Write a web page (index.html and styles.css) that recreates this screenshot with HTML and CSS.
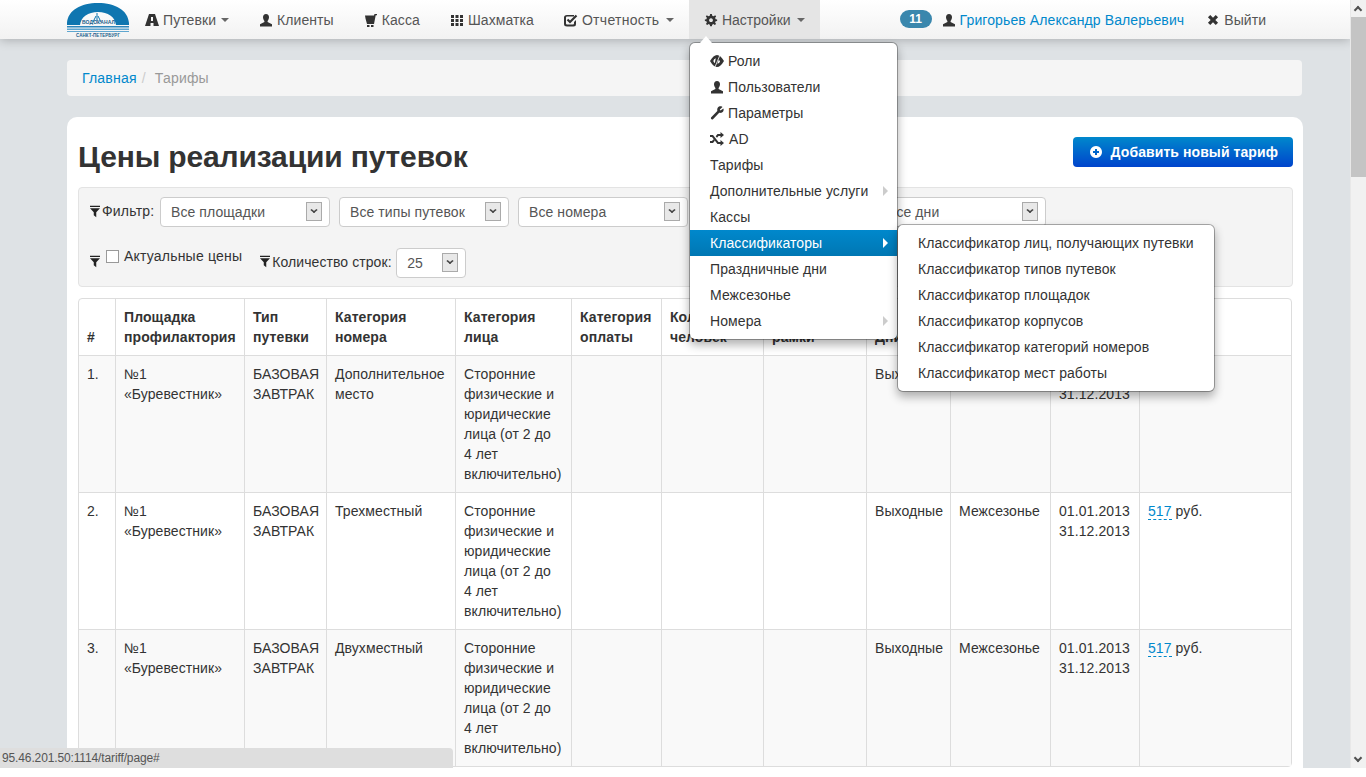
FILE: index.html
```html
<!DOCTYPE html>
<html lang="ru">
<head>
    <meta charset="UTF-8">
    <title>Тарифы</title>
    <link rel="stylesheet" href="styles.css">
</head>
<body>
    <div class="navbar">
        <svg class="logo" viewBox="0 0 64 38">
            <path d="M1 23C2 10 15 3 32 3C49 3 62 10 63 23V25H50C49 17 42 12 32 12C22 12 15 17 14 25H1Z" fill="#0f76b0"/>
            <path d="M31 13V21M27 22L30 16M35 22L32 16" stroke="#0f76b0" stroke-width="1" fill="none"/>
            <text class="logo-name" x="16" y="24" textLength="33" lengthAdjust="spacingAndGlyphs">ВОДОКАНАЛ</text>
            <rect x="1" y="26" width="62" height="1.500" fill="#2d86bb"/>
            <rect x="1" y="28.500" width="62" height="1.500" fill="#5fa6cf"/>
            <rect x="1" y="31" width="62" height="1" fill="#5fa6cf"/>
            <text class="logo-city" x="10" y="37" textLength="44" lengthAdjust="spacingAndGlyphs">САНКТ-ПЕТЕРБУРГ</text>
        </svg>
        <ul class="nav">
            <li><svg class="ico" viewBox="0 0 14 14"><path d="M4 1H10L14 13H8.500V10H5.500V13H0ZM6 4V8H8V4Z"/></svg>Путевки<span class="caret"></span></li>
            <li><svg class="ico" viewBox="0 0 14 14"><use href="#user"/></svg>Клиенты</li>
            <li><svg class="ico" viewBox="0 0 14 14"><path d="M1 2.500H10L10.500 1H13V2.300H11.700L10 11H3L1.500 5.500ZM3 12H5.500V14H3ZM7 12H9.500V14H7Z"/></svg>Касса</li>
            <li><svg class="ico" viewBox="0 0 14 14"><path d="M1 2H4V5H1ZM5.500 2H8.500V5H5.500ZM10 2H13V5H10ZM1 6H4V9H1ZM5.500 6H8.500V9H5.500ZM10 6H13V9H10ZM1 10H4V13H1ZM5.500 10H8.500V13H5.500ZM10 10H13V13H10Z"/></svg>Шахматка</li>
            <li class="nav-report"><svg class="ico" viewBox="0 0 14 14"><path d="M3 2H10V3.500H3Q2 3.500 2 4.500V10.500Q2 11.500 3 11.500H9Q10 11.500 10 10.500V9L12 7V11Q12 13.500 9.500 13.500H3Q0 13.500 0 11V4.500Q0 2 3 2Z"/><path d="M3.500 6.500L6 9L12.500 2.500" fill="none" stroke="#333" stroke-width="2.200"/></svg>Отчетность<span class="caret"></span></li>
            <li class="open"><svg class="ico" viewBox="-1 -1 16 16"><path fill-rule="evenodd" d="M6 0H8L8.400 2L10 2.700L11.800 1.500L12.900 3L11.700 4.500L12.300 6L14 6.300V8L12.300 8.300L11.700 9.800L12.800 11.500L11.300 12.800L9.800 11.600L8.300 12.300L8 14H6L5.700 12.300L4.200 11.600L2.700 12.800L1.200 11.500L2.300 9.800L1.700 8.300L0 8V6.300L1.700 6L2.300 4.500L1.100 3L2.200 1.500L4 2.700L5.600 2ZM7 5A2.200 2.200 0 1 0 7.010 5Z"/></svg>Настройки<span class="caret"></span></li>
        </ul>
        <div class="user-nav">
            <span class="badge">11</span>
            <svg class="ico" viewBox="0 0 14 14"><use href="#user"/></svg><a class="link user-name" href="#">Григорьев Александр Валерьевич</a>
            <span class="logout"><svg class="ico" viewBox="-2 -2 18 18"><path d="M0.500 3.500L3.500 0.500L7 4L10.500 0.500L13.500 3.500L10 7L13.500 10.500L10.500 13.500L7 10L3.500 13.500L0.500 10.500L4 7Z"/></svg>Выйти</span>
        </div>
    </div>

    <svg class="defs">
        <defs>
            <symbol id="user" viewBox="0 0 14 14"><path d="M7 1C9 1 10 2.500 10 4.300C10 5.800 9.300 7.200 8.600 7.900V9L13 11.300V13.500H1V11.300L5.400 9V7.900C4.700 7.200 4 5.800 4 4.300C4 2.500 5 1 7 1Z"/></symbol>
            <symbol id="funnel" viewBox="0 0 12 14"><path d="M0 0H12V1.500H0ZM0 3H12L7.500 8V14L4.500 11.500V8Z"/></symbol>
        </defs>
    </svg>

    <div class="page">
        <div class="breadcrumb"><a class="link" href="#">Главная</a><span class="sep">/</span><span class="crumb">Тарифы</span></div>

        <div class="panel">
            <div class="title-row">
                <h1>Цены реализации путевок</h1>
                <a class="btn-add" href="#">
                    <svg class="plus" viewBox="0 0 14 14"><path fill-rule="evenodd" d="M7 1A6 6 0 1 0 7.010 1ZM6 4H8V6H10V8H8V10H6V8H4V6H6Z"/></svg>Добавить новый тариф
                </a>
            </div>

            <div class="filters">
                <div class="filter-row">
                    <svg class="funnel"><use href="#funnel"/></svg><span class="flabel flabel-filter">Фильтр:</span>
                    <div class="sel">Все площадки<span class="sel-btn"></span></div>
                    <div class="sel">Все типы путевок<span class="sel-btn"></span></div>
                    <div class="sel">Все номера<span class="sel-btn"></span></div>
                    <div class="sel">Все оплаты<span class="sel-btn"></span></div>
                    <div class="sel">Все дни<span class="sel-btn"></span></div>
                </div>
                <div class="filter-row filter-row-2">
                    <svg class="funnel funnel-low"><use href="#funnel"/></svg>
                    <span class="check"></span><span class="actual">Актуальные цены</span>
                    <svg class="funnel"><use href="#funnel"/></svg><span class="flabel flabel-rows">Количество строк:</span>
                    <div class="sel sel-rows">25<span class="sel-btn"></span></div>
                </div>
            </div>

            <table class="prices">
                <thead>
                    <tr>
                        <th class="c-num">#</th>
                        <th class="c-place">Площадка профилактория</th>
                        <th class="c-type">Тип путевки</th>
                        <th class="c-room">Категория номера</th>
                        <th class="c-person">Категория лица</th>
                        <th class="c-pay">Категория оплаты</th>
                        <th class="c-count">Количество человек</th>
                        <th class="c-frame">Возрастные рамки</th>
                        <th class="c-days">Дни</th>
                        <th class="c-season">Сезон</th>
                        <th class="c-dates">Период</th>
                        <th class="c-price">Цена</th>
                    </tr>
                </thead>
                <tbody>
                    <tr>
                        <td>1.</td><td>№1 «Буревестник»</td><td>БАЗОВАЯ ЗАВТРАК</td><td>Дополнительное место</td>
                        <td>Сторонние физические и юридические лица (от 2 до 4&nbsp;лет включительно)</td><td></td><td></td><td></td>
                        <td>Выходные</td><td>Межсезонье</td><td>01.01.2013 31.12.2013</td><td><a class="price" href="#">517</a> руб.</td>
                    </tr>
                    <tr>
                        <td>2.</td><td>№1 «Буревестник»</td><td>БАЗОВАЯ ЗАВТРАК</td><td>Трехместный</td>
                        <td>Сторонние физические и юридические лица (от 2 до 4&nbsp;лет включительно)</td><td></td><td></td><td></td>
                        <td>Выходные</td><td>Межсезонье</td><td>01.01.2013 31.12.2013</td><td><a class="price" href="#">517</a> руб.</td>
                    </tr>
                    <tr>
                        <td>3.</td><td>№1 «Буревестник»</td><td>БАЗОВАЯ ЗАВТРАК</td><td>Двухместный</td>
                        <td>Сторонние физические и юридические лица (от 2 до 4&nbsp;лет включительно)</td><td></td><td></td><td></td>
                        <td>Выходные</td><td>Межсезонье</td><td>01.01.2013 31.12.2013</td><td><a class="price" href="#">517</a> руб.</td>
                    </tr>
                </tbody>
            </table>
        </div>
    </div>

    <!-- Settings menu -->
    <ul class="menu menu-main">
        <li><svg class="ico" viewBox="0 0 14 14"><path fill-rule="evenodd" d="M0 7Q3.500 1 7 1Q10.500 1 14 7Q10.500 13 7 13Q3.500 13 0 7ZM5.800 4.300Q3.800 4.800 3.300 7Q3.800 8.600 4.800 9.300ZM8.800 5.700L7.300 9.800Q9.500 9.300 10 7.400Q9.500 6.300 8.800 5.700Z"/><path d="M10.200 0.500L4.800 13.500" stroke="#fff" stroke-width="0.800"/></svg>Роли</li>
        <li><svg class="ico" viewBox="0 0 14 14"><use href="#user"/></svg>Пользователи</li>
        <li><svg class="ico" viewBox="0 0 14 14"><path d="M9 0.500C11 0 12 .5 12.500 1L9.800 3.500L10.500 4.500L13.400 2.500C14 4 13.500 6 11.500 6.800C10.500 7 9.800 7 9.200 6.800L3 13.200C2 14 .5 13 1 11.500L7.300 5C7 3 7.500 1.200 9 0.500Z"/></svg>Параметры</li>
        <li><svg class="ico ico-wide" viewBox="0 0 14 14"><path d="M0 3H3L8.500 10H10.500V8L14 11L10.500 14V12H7.500L2 5H0ZM0 9H2L3.500 7.200L4.800 8.800L3 11H0ZM7.500 2H10.500V0L14 3L10.500 6V4H8.500L7 5.800L5.700 4.200Z"/></svg>AD</li>
        <li>Тарифы</li>
        <li class="has-sub">Дополнительные услуги</li>
        <li>Кассы</li>
        <li class="has-sub active">Классификаторы</li>
        <li>Праздничные дни</li>
        <li>Межсезонье</li>
        <li class="has-sub">Номера</li>
    </ul>
    <ul class="menu menu-sub">
        <li>Классификатор лиц, получающих путевки</li>
        <li>Классификатор типов путевок</li>
        <li>Классификатор площадок</li>
        <li>Классификатор корпусов</li>
        <li>Классификатор категорий номеров</li>
        <li>Классификатор мест работы</li>
    </ul>

    <div class="statusbar">95.46.201.50:1114/tariff/page#</div>
    <div class="scrollbar"><span class="scroll-up"></span><span class="scroll-thumb"></span><span class="scroll-down"></span></div>
    <div class="bottom-strip"></div>
</body>
</html>
```

FILE: styles.css
```css
html, body {
    margin: 0;
    height: 777px;
    overflow: hidden;
}
body {
    font-family: "Liberation Sans", Arial, sans-serif;
    font-size: 14px;
    line-height: 20px;
    letter-spacing: 0.08px;
    color: #333;
    background: #dee2e5;
    width: 1350px;
}
ul {
    list-style: none;
    margin: 0;
    padding: 0;
}
a {
    text-decoration: none;
}
.link {
    color: #0088cc;
}
.defs {
    display: none;
}
.navbar {
    height: 39px;
    background: linear-gradient(to bottom, #ffffff, #f2f2f2);
    box-shadow: 0 1px 10px rgba(0, 0, 0, 0.25);
    display: flex;
    padding-left: 66px;
    position: relative;
}
.logo {
    width: 64px;
    height: 38px;
}
.logo-name {
    font-size: 5px;
    font-weight: bold;
    fill: #1b5e8c;
}
.logo-city {
    font-size: 4.500px;
    font-weight: bold;
    fill: #1b5e8c;
}
.nav {
    display: flex;
}
.nav li {
    display: flex;
    align-items: center;
    padding: 0 15px;
    color: #555;
}
.nav li.nav-report {
    letter-spacing: 0.3px;
}
.nav li.open {
    background: #e5e5e5;
    letter-spacing: 0;
}
.ico {
    width: 14px;
    height: 14px;
    margin-right: 4px;
    fill: #333;
    flex: none;
}
.ico-wide {
    margin-right: 5px;
}
.caret {
    width: 0;
    height: 0;
    margin-left: 5px;
    border-left: 4px solid transparent;
    border-right: 4px solid transparent;
    border-top: 4px solid #666;
}
.nav-report .caret {
    margin-left: 6.500px;
}
.open .caret {
    margin-left: 6px;
}
.user-nav {
    display: flex;
    align-items: center;
    margin-left: 80px;
    color: #555;
}
.user-name {
    letter-spacing: 0.1px;
}
.badge {
    background: #3a87ad;
    color: #fff;
    font-weight: bold;
    font-size: 12px;
    line-height: 18px;
    width: 32px;
    text-align: center;
    border-radius: 9px;
    margin: 0 10px 1px 0;
}
.logout {
    display: flex;
    align-items: center;
    margin-left: 22px;
}
.page {
    padding: 21px 48px 0 67px;
}
.breadcrumb {
    height: 36px;
    line-height: 36px;
    background: #f5f5f5;
    border-radius: 4px;
    padding-left: 15px;
    letter-spacing: 0.2px;
}
.sep {
    color: #ccc;
    margin: 0 9px 0 5px;
}
.crumb {
    color: #999;
}
.panel {
    background: #fff;
    border-radius: 10px;
    margin: 21px -1px 0 0;
    padding: 20px 10px 0 11px;
    height: 700px;
}
.title-row {
    display: flex;
    justify-content: space-between;
    align-items: flex-start;
    height: 50px;
}
h1 {
    margin: 0;
    font-size: 30px;
    line-height: 40px;
    letter-spacing: -0.15px;
    color: #333;
}
.btn-add {
    display: flex;
    align-items: center;
    height: 30px;
    padding: 0 15px 0 16px;
    color: #fff;
    font-weight: bold;
    border-radius: 4px;
    background: linear-gradient(to bottom, #0088cc, #0044cc);
}
.plus {
    width: 14px;
    height: 14px;
    fill: #fff;
    margin-right: 8px;
}
.filters {
    background: #f4f4f4;
    border: 1px solid #e3e3e3;
    border-radius: 4px;
    height: 98px;
    padding: 0 11px;
}
.filter-row {
    display: flex;
    align-items: center;
    height: 30px;
    margin-top: 9px;
}
.filter-row-2 {
    margin-top: 20px;
}
.funnel {
    width: 10px;
    height: 13px;
    fill: #222;
    flex: none;
    margin: -2px 2px 0 0;
}
.funnel-low {
    margin-right: 6px;
}
.flabel {
    flex: none;
}
.flabel-filter {
    width: 58px;
    margin-top: -3px;
    letter-spacing: 0.2px;
}
.flabel-rows {
    width: 124px;
    margin-top: -1px;
}
.sel {
    box-sizing: border-box;
    width: 170px;
    height: 30px;
    line-height: 28px;
    padding-left: 10px;
    border: 1px solid #ccc;
    border-radius: 4px;
    background: #fff;
    color: #555;
    position: relative;
    margin-right: 9px;
    flex: none;
}
.sel-rows {
    width: 70px;
    margin-top: 2px;
}
.sel-btn {
    position: absolute;
    right: 7px;
    top: 4px;
    width: 14px;
    height: 17px;
    border: 1px solid #aaa;
    background: #e8e8e8;
}
.sel-btn::after {
    content: "";
    position: absolute;
    left: 4px;
    top: 4px;
    width: 6px;
    height: 6px;
    border-right: 2px solid #444;
    border-bottom: 2px solid #444;
    transform: scale(0.85, 0.7) rotate(45deg);
    box-sizing: border-box;
}
.check {
    width: 11px;
    height: 11px;
    border: 1px solid #999;
    background: #fff;
    margin-right: 5px;
    margin-top: -11px;
}
.actual {
    margin-right: 18px;
    margin-top: -12px;
    letter-spacing: 0.2px;
}
.prices {
    border-collapse: separate;
    border-spacing: 0;
    table-layout: fixed;
    width: 1214px;
    margin-top: 11px;
    border: 1px solid #ddd;
    border-radius: 4px;
}
.prices th, .prices td {
    padding: 8px;
    text-align: left;
    vertical-align: top;
    border-left: 1px solid #ddd;
    border-top: 1px solid #ddd;
    overflow: hidden;
}
.prices th {
    vertical-align: bottom;
    border-top: 0;
    color: #333;
}
.prices th:first-child, .prices td:first-child {
    border-left: 0;
}
.prices tbody tr:nth-child(odd) td {
    background: #f9f9f9;
}
.c-num { width: 20px; }
.c-place { width: 112px; }
.c-type { width: 65px; }
.c-room { width: 112px; }
.c-person { width: 99px; }
.c-pay { width: 73px; }
.c-count { width: 85px; }
.c-frame { width: 86px; }
.c-days { width: 67px; }
.c-season { width: 83px; }
.c-dates { width: 72px; }
.price {
    color: #0088cc;
    border-bottom: 1px dashed #0088cc;
}
.menu {
    position: absolute;
    background: #fff;
    border: 1px solid rgba(0, 0, 0, 0.3);
    border-radius: 6px;
    box-shadow: 0 5px 10px rgba(0, 0, 0, 0.3);
    padding: 5px 0;
    color: #333;
    background-clip: padding-box;
}
.menu li {
    height: 26px;
    line-height: 26px;
    padding: 0 20px;
    display: flex;
    align-items: center;
    position: relative;
    white-space: nowrap;
}
.menu-main {
    left: 689px;
    top: 42px;
    width: 207px;
}
.menu-main::before {
    content: "";
    position: absolute;
    left: 10px;
    top: -7px;
    border-left: 6px solid transparent;
    border-right: 6px solid transparent;
    border-bottom: 7px solid #fff;
}
.has-sub::after {
    content: "";
    position: absolute;
    right: 9px;
    top: 8px;
    border-left: 5px solid #ccc;
    border-top: 5px solid transparent;
    border-bottom: 5px solid transparent;
}
.menu li.active {
    background: linear-gradient(to bottom, #0088cc, #0077b3);
    color: #fff;
}
.menu li.active::after {
    border-left-color: #fff;
}
.menu-sub {
    left: 897px;
    top: 224px;
    width: 316px;
}
.statusbar {
    position: absolute;
    left: 0;
    top: 748px;
    width: 453px;
    height: 20px;
    line-height: 21px;
    box-sizing: border-box;
    padding-left: 2px;
    background: #dedede;
    border-top-right-radius: 4px;
    color: #555;
    font-size: 12px;
    letter-spacing: -0.13px;
}
.scrollbar {
    position: absolute;
    left: 1350px;
    top: 0;
    width: 16px;
    height: 777px;
    background: #f1f1f1;
    border-left: 1px solid #e8e8e8;
    box-sizing: border-box;
}
.scroll-up {
    display: block;
    height: 17px;
    position: relative;
}
.scroll-up::after, .scroll-down::after {
    content: "";
    position: absolute;
    left: 4px;
    top: 7px;
    width: 6px;
    height: 6px;
    border-left: 2px solid #505050;
    border-top: 2px solid #505050;
    transform: rotate(45deg);
    box-sizing: border-box;
}
.scroll-thumb {
    display: block;
    height: 160px;
    background: #c4c4c4;
}
.scroll-down {
    position: absolute;
    left: 0;
    top: 751px;
    width: 15px;
    height: 17px;
}
.scroll-down::after {
    top: 4px;
    transform: rotate(225deg);
}
.bottom-strip {
    position: absolute;
    left: 0;
    top: 768px;
    width: 1366px;
    height: 9px;
    background: #fff;
}
```
